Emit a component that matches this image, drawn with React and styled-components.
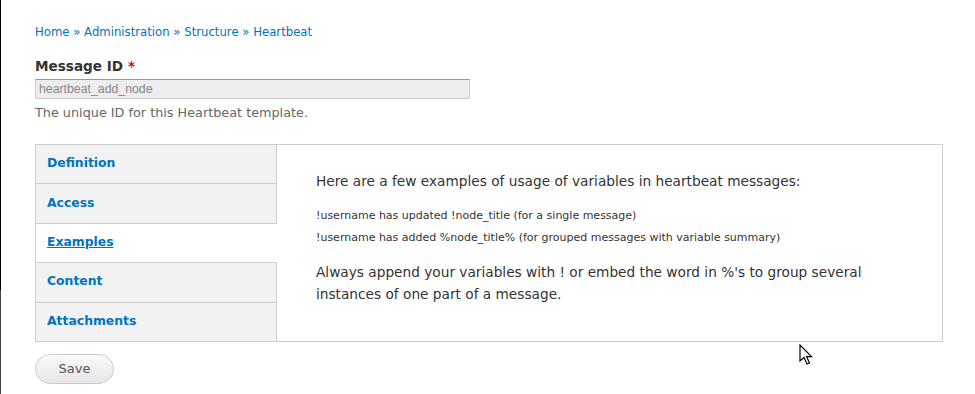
import React from 'react';
import styled, { createGlobalStyle } from 'styled-components';

const GlobalStyle = createGlobalStyle`
	html, body {
		margin: 0;
		padding: 0;
		background: #fff;
	}
	body {
		font-family: "DejaVu Sans", Verdana, sans-serif;
		color: #333;
	}
`;

const tabs = ['Definition', 'Access', 'Examples', 'Content', 'Attachments'];

const App = () => {
	return (
		<Page>
			<GlobalStyle />
			<EdgeLine />
			<Breadcrumb>
				<Crumb href="#">Home</Crumb> » <Crumb href="#">Administration</Crumb> »{' '}
				<Crumb href="#">Structure</Crumb> » <Crumb href="#">Heartbeat</Crumb>
			</Breadcrumb>

			<Label>
				Message ID <Required>*</Required>
			</Label>
			<TextInput value="heartbeat_add_node" disabled readOnly />
			<Description>The unique ID for this Heartbeat template.</Description>

			<VerticalTabs>
				<TabList>
					{tabs.map((tab) => (
						<Tab key={tab} active={tab === 'Examples'}>
							<TabLink href="#" active={tab === 'Examples'}>
								{tab}
							</TabLink>
						</Tab>
					))}
				</TabList>
				<Pane>
					<Lead>Here are a few examples of usage of variables in heartbeat messages:</Lead>
					<Example>!username has updated !node_title (for a single message)</Example>
					<Example>!username has added %node_title% (for grouped messages with variable summary)</Example>
					<Note>
						Always append your variables with ! or embed the word in %'s to group several
						instances of one part of a message.
					</Note>
				</Pane>
			</VerticalTabs>

			<SaveButton>Save</SaveButton>

			<Cursor width="14" height="22" viewBox="0 0 14 22">
				<path
					d="M1 1 L1 17 L5 13.5 L8 20 L10.5 19 L7.6 12.6 L12.5 12.6 Z"
					fill="#fff"
					stroke="#000"
					strokeWidth="1.2"
					strokeLinejoin="miter"
				/>
			</Cursor>
		</Page>
	);
};

export default App;

const Page = styled.div`
	position: relative;
	width: 975px;
	height: 394px;
	box-sizing: border-box;
	padding: 23px 0 0 35px;
	overflow: hidden;
`;

const EdgeLine = styled.div`
	position: absolute;
	left: 0;
	top: 0;
	width: 1px;
	height: 394px;
	background: linear-gradient(to bottom, #000 0, #000 290px, #444 290px, #444 100%);
`;

const Breadcrumb = styled.div`
	font-size: 11.7px;
	line-height: 18px;
	color: #0074bd;
`;

const Crumb = styled.a`
	color: #0074bd;
	text-decoration: none;
`;

const Label = styled.div`
	margin-top: 16px;
	font-size: 13.6px;
	line-height: 18px;
	font-weight: bold;
	color: #333;
`;

const Required = styled.span`
	color: #e00;
`;

const TextInput = styled.input`
	display: block;
	margin-top: 4px;
	width: 435px;
	height: 20px;
	box-sizing: border-box;
	padding: 0 3px;
	border: 1px solid #ccc;
	border-top-color: #999;
	background: #ededed;
	font-family: "Liberation Sans", Arial, sans-serif;
	font-size: 12.3px;
	color: #888;
	outline: none;
	&:disabled {
		color: #888;
	}
`;

const Description = styled.div`
	margin-top: 5px;
	font-size: 12.8px;
	line-height: 18px;
	color: #666;
`;

const VerticalTabs = styled.div`
	display: flex;
	margin-top: 22px;
	width: 908px;
`;

const TabList = styled.ul`
	list-style: none;
	margin: 0;
	padding: 0;
	width: 242px;
	flex: 0 0 242px;
	box-sizing: border-box;
	border-top: 1px solid #ccc;
	border-left: 1px solid #ccc;
`;

const Tab = styled.li`
	display: flex;
	align-items: center;
	height: 39.4px;
	box-sizing: border-box;
	padding: 0 0 3px 11px;
	border-bottom: 1px solid #ccc;
	border-right: 1px solid ${(p) => (p.active ? '#fff' : '#ccc')};
	background: ${(p) => (p.active ? '#fff' : '#f2f2f2')};
`;

const TabLink = styled.a`
	font-size: 12.4px;
	font-weight: bold;
	color: #0074bd;
	text-decoration: ${(p) => (p.active ? 'underline' : 'none')};
`;

const Pane = styled.div`
	flex: 1;
	box-sizing: border-box;
	border: 1px solid #ccc;
	border-left: none;
	padding: 25px 40px 0 39px;
	font-family: "DejaVu Sans", sans-serif;
	color: #333;
`;

const Lead = styled.p`
	margin: 0 0 13px;
	font-size: 13.7px;
	line-height: 22px;
`;

const Example = styled.p`
	margin: 0;
	font-size: 11px;
	line-height: 22px;
`;

const Note = styled.p`
	margin: 12px 0 0;
	font-size: 13.7px;
	line-height: 22px;
`;

const SaveButton = styled.button`
	display: block;
	margin-top: 12px;
	width: 79px;
	height: 30px;
	border: 1px solid #ccc;
	border-radius: 15px;
	background: linear-gradient(to bottom, #fafafa, #e6e6e6);
	font-family: "DejaVu Sans", sans-serif;
	font-size: 13px;
	color: #555;
	cursor: pointer;
`;

const Cursor = styled.svg`
	position: absolute;
	left: 799px;
	top: 344px;
`;
